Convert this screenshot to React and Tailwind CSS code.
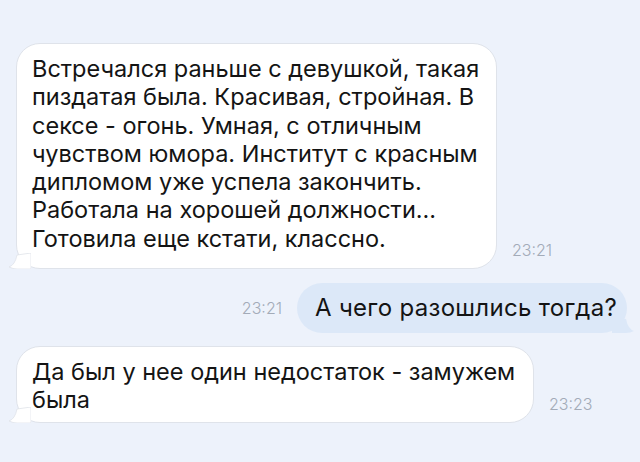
import React from 'react';

const font = { fontFamily: 'Inter, "Noto Sans", sans-serif' };

function TailLeft() {
  return (
    <svg className="absolute left-[-8px] bottom-[-1px]" width="22" height="16" viewBox="0 0 22 16">
      <path d="M22 0 L22 16 L8 16 Q4 16 0 14 Q6 12 8 2 Z" fill="#ffffff" stroke="#dfe3ea" strokeWidth="0.8" />
    </svg>
  );
}

function TailRight() {
  return (
    <svg className="absolute right-[-7px] bottom-0" width="22" height="16" viewBox="0 0 22 16">
      <path d="M0 0 L0 16 L14 16 Q18 16 22 14 Q16 12 14 2 Z" fill="#dce8f8" />
    </svg>
  );
}

function Incoming({ children, time, width, className }) {
  return (
    <div className={`flex items-end ${className}`}>
      <div className={`relative ml-[16px] ${width} bg-white rounded-[24px] border border-[#dfe3ea] px-[15px] text-[23.5px] leading-[28.3px] text-[#141414]`}>
        <TailLeft />
        <div className="relative">{children}</div>
      </div>
      <div className="ml-[15px] mb-[7px] text-[16px] font-light text-[#a3abb8]">{time}</div>
    </div>
  );
}

export default function App() {
  return (
    <div className="w-[640px] h-[462px] bg-[#edf2fb] overflow-hidden pt-[43px]" style={font}>
      <Incoming time="23:21" width="w-[481px]">
        <div className="pt-[11px] pb-[15px] whitespace-nowrap">
          Встречался раньше с девушкой, такая<br />
          пиздатая была. Красивая, стройная. В<br />
          сексе - огонь. Умная, с отличным<br />
          чувством юмора. Институт с красным<br />
          дипломом уже успела закончить.<br />
          Работала на хорошей должности...<br />
          Готовила еще кстати, классно.
        </div>
      </Incoming>

      <div className="flex items-center justify-end mt-[14px] mr-[13px]">
        <div className="mr-[15px] text-[16px] font-light text-[#a3abb8]">23:21</div>
        <div className="relative w-[330px] h-[50px] flex items-center bg-[#dce8f8] rounded-[25px] pl-[18px] text-[24px] tracking-[0.3px] text-[#141414] whitespace-nowrap">
          <TailRight />
          <span className="relative">А чего разошлись тогда?</span>
        </div>
      </div>

      <Incoming time="23:23" width="w-[518px]" className="mt-[13px]">
        <div className="pt-[11px] pb-[7px] whitespace-nowrap">
          Да был у нее один недостаток - замужем<br />
          была
        </div>
      </Incoming>
    </div>
  );
}
